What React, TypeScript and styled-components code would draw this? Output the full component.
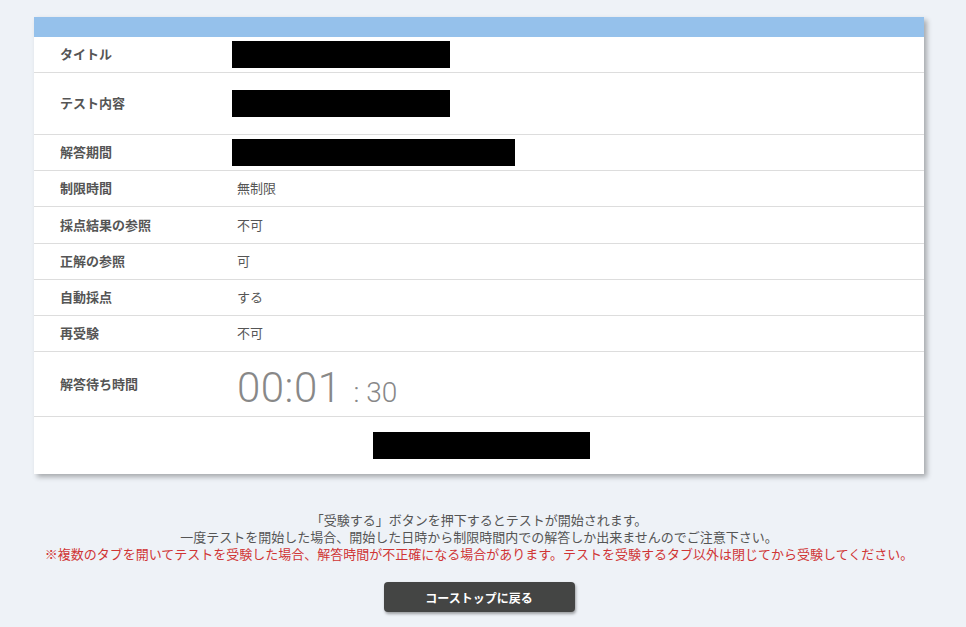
import React, { FC } from "react";
import styled, { createGlobalStyle } from "styled-components";

const GlobalStyle = createGlobalStyle`
  html, body {
    margin: 0;
    padding: 0;
    background: #eef2f7;
  }
  body {
    font-family: "Noto Sans CJK JP", "Noto Sans", sans-serif;
    color: #555;
  }
`;

const Page = styled.div`
  display: flex;
  flex-direction: column;
  align-items: center;
  padding-top: 17px;
  width: 966px;
  min-height: 627px;
  box-sizing: border-box;
`;

const Card = styled.div`
  width: 890px;
  margin-left: -8px;
  background: #fff;
  box-shadow: 3px 3px 5px rgba(0, 0, 0, 0.3);
`;

const CardHeader = styled.div`
  height: 20px;
  background: #95c1eb;
`;

interface IRowProps {
  height?: string;
  center?: boolean;
}
const Row = styled.div<IRowProps>`
  display: flex;
  align-items: center;
  justify-content: ${({ center }): string => (center ? "center" : "flex-start")};
  height: ${({ height }): string => height || "36px"};
  box-sizing: border-box;
  border-bottom: 1px solid #ddd;

  &:last-child {
    border-bottom: none;
  }
`;

const Label = styled.div`
  flex: 0 0 177px;
  padding-left: 26px;
  padding-bottom: 2px;
  font-size: 13px;
  font-weight: 700;
  color: #555;
`;

const Value = styled.div`
  padding-bottom: 2px;
  font-size: 13px;
  color: #555;
`;

interface IRedactedProps {
  width: string;
  offset?: string;
}
const Redacted = styled.div<IRedactedProps>`
  width: ${({ width }): string => width};
  height: 27px;
  margin-left: ${({ offset }): string => offset || "-5px"};
  background: #000;
`;

const Timer = styled.div`
  display: flex;
  align-items: baseline;
  font-family: Roboto, "Noto Sans", sans-serif;
  font-weight: 300;
  color: #888;
  margin-top: 6px;
`;

const TimerMain = styled.span`
  font-size: 42px;
  letter-spacing: 0.5px;
`;

const TimerSeconds = styled.span`
  font-size: 28px;
  margin-left: 12px;
`;

const Notice = styled.div`
  margin-top: 37px;
  margin-left: -8px;
  text-align: center;
  font-size: 13px;
  line-height: 17px;
  color: #555;
`;

const Warning = styled.div`
  color: #d03535;
`;

const BackButton = styled.button`
  width: 191px;
  height: 30px;
  margin-top: 20px;
  margin-left: -8px;
  border: none;
  border-radius: 4px;
  background: #444544;
  color: #fff;
  font-family: "Noto Sans CJK JP", "Noto Sans", sans-serif;
  font-size: 12px;
  font-weight: 700;
  box-shadow: 1px 2px 3px rgba(0, 0, 0, 0.35);
  cursor: pointer;
`;

const rows: { label: string; value: string; height?: string }[] = [
  { label: "制限時間", value: "無制限" },
  { label: "採点結果の参照", value: "不可", height: "37px" },
  { label: "正解の参照", value: "可" },
  { label: "自動採点", value: "する" },
  { label: "再受験", value: "不可" },
];

const App: FC = () => {
  return (
    <Page>
      <GlobalStyle />
      <Card>
        <CardHeader />
        <Row height="36px">
          <Label>タイトル</Label>
          <Redacted width="218px" />
        </Row>
        <Row height="62px">
          <Label>テスト内容</Label>
          <Redacted width="218px" />
        </Row>
        <Row>
          <Label>解答期間</Label>
          <Redacted width="283px" />
        </Row>
        {rows.map((row) => (
          <Row key={row.label} height={row.height}>
            <Label>{row.label}</Label>
            <Value>{row.value}</Value>
          </Row>
        ))}
        <Row height="65px">
          <Label>解答待ち時間</Label>
          <Timer>
            <TimerMain>00:01</TimerMain>
            <TimerSeconds>: 30</TimerSeconds>
          </Timer>
        </Row>
        <Row height="57px" center>
          <Redacted width="217px" offset="5px" />
        </Row>
      </Card>
      <Notice>
        <div>「受験する」ボタンを押下するとテストが開始されます。</div>
        <div>一度テストを開始した場合、開始した日時から制限時間内での解答しか出来ませんのでご注意下さい。</div>
        <Warning>
          ※複数のタブを開いてテストを受験した場合、解答時間が不正確になる場合があります。テストを受験するタブ以外は閉じてから受験してください。
        </Warning>
      </Notice>
      <BackButton>コーストップに戻る</BackButton>
    </Page>
  );
};

export default App;
